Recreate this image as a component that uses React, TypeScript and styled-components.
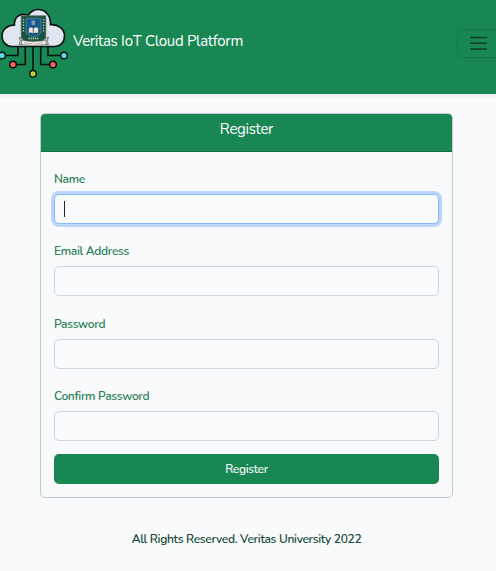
import React from "react";
import styled, { createGlobalStyle, css } from "styled-components";

const GREEN = "#198754";

const GlobalStyle = createGlobalStyle`
  *, *::before, *::after { box-sizing: border-box; }
  body {
    margin: 0;
    background: #f8fafc;
    font-family: Nunito, Lato, "Open Sans", sans-serif;
    font-size: 12px;
    letter-spacing: -0.31px;
    overflow: hidden;
  }
`;

const Page = styled.div`
  display: flex;
  flex-direction: column;
  height: 571px;
`;

const Navbar = styled.nav`
  display: flex;
  align-items: flex-start;
  height: 94px;
  flex: none;
  background: ${GREEN};
  box-shadow: 0 2px 4px rgba(0, 0, 0, 0.075);
`;

const Logo = styled.svg`
  flex: none;
  width: 70px;
  height: 82px;
`;

const Brand = styled.a`
  margin: 31px auto 0 3px;
  color: #fff;
  font-size: 15px;
  line-height: 21px;
  white-space: nowrap;
`;

const Toggler = styled.button`
  flex: none;
  width: 39px;
  height: 29px;
  margin-top: 29px;
  padding: 0 0 0 12px;
  border: 1px solid rgba(0, 0, 0, 0.1);
  border-right: 0;
  border-radius: 5px 0 0 5px;
  background: transparent;
  display: flex;
  align-items: center;
`;

const Card = styled.section`
  width: 413px;
  height: 385px;
  margin: 19px 0 0 40px;
  border: 1px solid #c6c9cb;
  border-radius: 5px;
  overflow: hidden;
  flex: none;
`;

const CardHeader = styled.header`
  height: 38px;
  padding-top: 5px;
  background: ${GREEN};
  border-bottom: 1px solid #14713f;
  color: #fff;
  font-size: 15px;
  line-height: 21px;
  text-align: center;
`;

const Form = styled.form`
  display: flex;
  flex-direction: column;
  padding: 18px 13px 13px;
`;

const Field = styled.div<{ $gap: number }>`
  display: flex;
  flex-direction: column;
  margin-bottom: ${(p) => p.$gap}px;
`;

const Label = styled.label`
  height: 18px;
  margin-bottom: 6px;
  color: #2c8055;
  font-weight: 600;
  line-height: 18px;
`;

const Control = styled.div`
  position: relative;
  display: flex;
`;

const Input = styled.input<{ $active?: boolean }>`
  width: 100%;
  height: 30px;
  padding: 4px 9px;
  border: 1px solid #ced4da;
  border-radius: 5px;
  background: #f9fbfd;
  outline: none;
  ${(p) =>
    p.$active &&
    css`
      border-color: #86b7fe;
      box-shadow: 0 0 0 3px #bbd5fb;
    `}
`;

const Caret = styled.span`
  position: absolute;
  left: 10px;
  top: 7px;
  width: 1px;
  height: 16px;
  background: #212529;
`;

const Submit = styled.button`
  height: 30px;
  padding: 0;
  border: 0;
  border-radius: 5px;
  background: ${GREEN};
  color: #fff;
  font: inherit;
  font-weight: 500;
  letter-spacing: -0.31px;
`;

const Footer = styled.footer`
  margin-top: 32px;
  padding-right: 3px;
  color: #174a36;
  font-weight: 600;
  line-height: 18px;
  text-align: center;
`;

const fields = [
  { id: "name", label: "Name", type: "text", gap: 18, active: true },
  { id: "email", label: "Email Address", type: "email", gap: 19, active: false },
  { id: "password", label: "Password", type: "password", gap: 18, active: false },
  { id: "confirm", label: "Confirm Password", type: "password", gap: 13, active: false },
];

function CloudLogo() {
  return (
    <Logo viewBox="0 0 70 82" aria-label="Veritas University cloud">
      <path
        d="M18 46V55.5H5M25.3 46V64.5H16M33 46V71M40.7 46V64.5H50M48 46V55.5H61"
        fill="none"
        stroke="#07110d"
        strokeWidth="1.6"
      />
      <path
        d="M11.5 46.5C5.5 46 2 41.500 2 36C2 29.500 7.500 25 14.500 25C14 18 19 13.500 25 14.500L28 15.500C31 11 35 9.300 39 9.500C46.500 10 51 17 50.500 24.700C58 24 64.500 29 64.500 36C64.500 42 60.500 46.500 54.500 46.500Z"
        fill="#dfe6ef"
        stroke="#07110d"
        strokeWidth="1.6"
      />
      <g stroke="#07110d" strokeWidth="1.4">
        <circle cx="2" cy="55.500" r="3.300" fill="#5cdce0" />
        <circle cx="64" cy="55.500" r="3.300" fill="#5cdce0" />
        <circle cx="13" cy="64.500" r="3.300" fill="#ff5c5e" />
        <circle cx="53" cy="64.500" r="3.300" fill="#ff5c5e" />
        <circle cx="33" cy="73.800" r="3.300" fill="#bdd136" />
      </g>
      <path d="M21.200 15.800H45.800V37Q45 40 40 42H27Q22 40 21.200 37Z" fill="#17543f" stroke="#59665f" strokeWidth=".7" />
      <path d="M26 18.300H41V32Q40 36 33.500 37Q27 36 26 32Z" fill="#145d94" stroke="#82999b" strokeWidth=".5" />
      <path d="M23.500 19V33M43.500 19V33" stroke="#bdcac4" strokeWidth="1.3" strokeDasharray="1.300 1.500" />
      <path d="M28.500 28Q31 26 33.300 28Q36 26 38.500 28V33.500Q36 32 33.300 34Q31 32 28.500 33.500Z" fill="#e8e5dc" stroke="#243e50" strokeWidth=".6" />
      <path d="M33.300 27V34" stroke="#243e50" strokeWidth=".8" />
      <path d="M31.500 20.500H35V25H31.500Z" fill="#7f9b9c" />
      <path d="M28.500 38.500H39" stroke="#c6d0c9" strokeWidth="1.300" strokeDasharray="1.300 .8" />
      <path d="M19 37L22 38.500V44.500H19L20.300 41ZM48.500 37L45.500 38.500V44.500H48.500L47.200 41Z" fill="#c8c9c6" stroke="#484e4c" strokeWidth=".6" />
      <path d="M21.500 40.500Q33.500 42.500 46 40.500V44.500Q33.500 46.500 21.500 44.500Z" fill="#f3f1eb" stroke="#64645e" strokeWidth=".6" />
      <path d="M24 42.800Q33.500 44.500 43.500 42.800" fill="none" stroke="#85857f" strokeWidth=".8" strokeDasharray="1.500 .7" />
    </Logo>
  );
}

export default function App() {
  return (
    <Page>
      <GlobalStyle />
      <Navbar>
        <CloudLogo />
        <Brand>Veritas IoT Cloud Platform</Brand>
        <Toggler type="button" aria-label="Toggle navigation">
          <svg width="18" height="15" viewBox="0 0 18 15">
            <path d="M.2 1.500H17.200M.2 7.300H17.200M.2 13H17.200" stroke="#0b3d26" strokeWidth="1.500" />
          </svg>
        </Toggler>
      </Navbar>
      <Card>
        <CardHeader>Register</CardHeader>
        <Form>
          {fields.map((f) => (
            <Field key={f.id} $gap={f.gap}>
              <Label htmlFor={f.id}>{f.label}</Label>
              <Control>
                <Input id={f.id} type={f.type} $active={f.active} />
                {f.active && <Caret />}
              </Control>
            </Field>
          ))}
          <Submit type="button">Register</Submit>
        </Form>
      </Card>
      <Footer>All Rights Reserved. Veritas University 2022</Footer>
    </Page>
  );
}
